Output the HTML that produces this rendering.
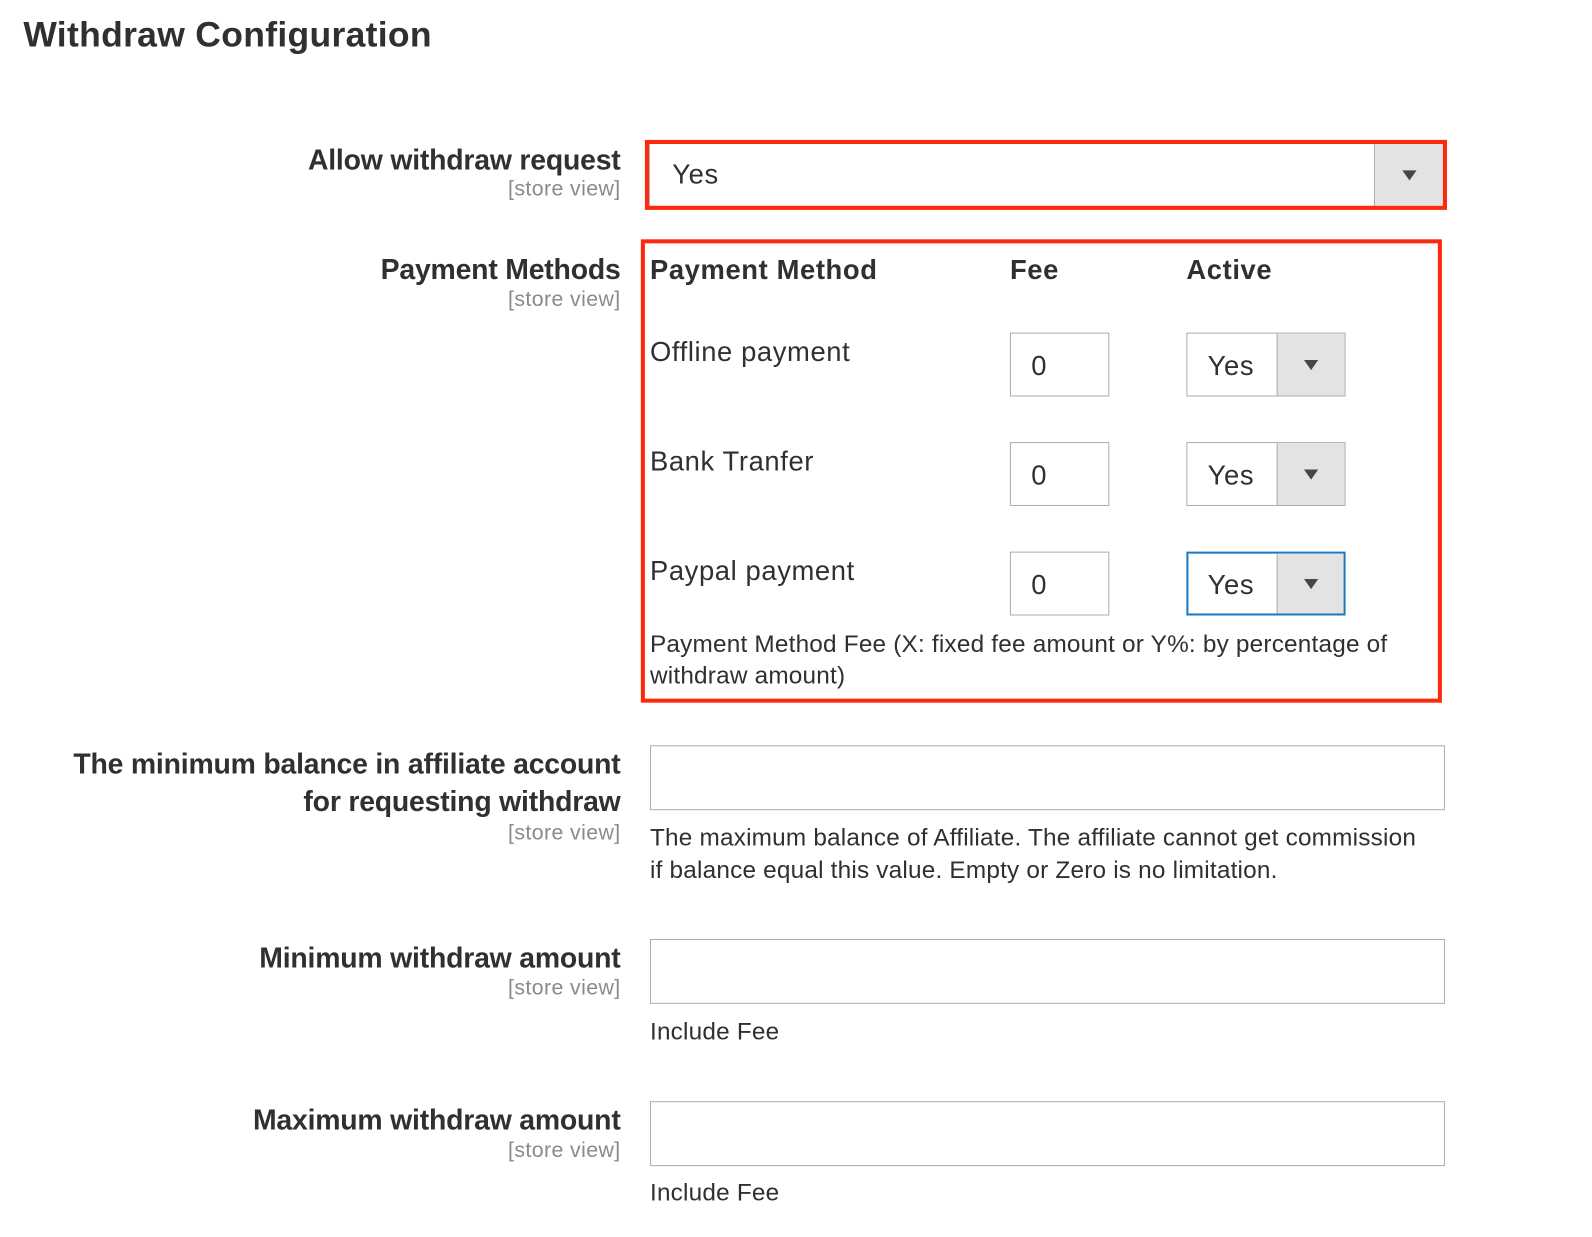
<!DOCTYPE html>
<html><head><meta charset="utf-8"><style>
*{box-sizing:border-box;margin:0;padding:0}
body{width:1592px;height:1236px;background:#fff;font-family:"Liberation Sans",sans-serif;color:#303030;position:relative;overflow:hidden}
#w{position:absolute;left:0;top:0;width:1570px;height:1220px;transform:scale(1.014);transform-origin:0 0}
.a{position:absolute;white-space:nowrap}
.lbl{right:958px;font-size:28px;font-weight:bold;text-align:right;line-height:30px;color:#303030;letter-spacing:-0.2px}
.sv{right:958px;font-size:21px;color:#8a8a8a;line-height:24px;letter-spacing:0.4px}
.t{font-size:27px;line-height:30px;letter-spacing:0.6px}
.h{font-size:27px;line-height:30px;font-weight:bold;letter-spacing:0.6px}
.n{font-size:24px;line-height:31px;letter-spacing:0.2px}
.box{position:absolute;border:1px solid #adadad;background:#fff}
.sel{position:absolute;border:1px solid #adadad;background:#fff}
.sel .arr{position:absolute;top:0;right:0;bottom:0;background:#e3e3e3;border-left:1px solid #adadad}
.sel .arr:after{content:"";position:absolute;left:50%;top:50%;margin:-5px 0 0 -7px;border-left:7px solid transparent;border-right:7px solid transparent;border-top:10px solid #4a4541}
.red{position:absolute;border:4px solid #fc2a0d}
</style></head><body><div id="w">
<div class="a" style="left:23px;top:15px;font-size:35px;font-weight:bold;color:#303030;line-height:40px;letter-spacing:0.3px">Withdraw Configuration</div>

<div class="a lbl" style="top:143px">Allow withdraw request</div>
<div class="a sv" style="top:175px">[store view]</div>
<div class="sel" style="left:640px;top:141px;width:784px;height:63px"><div class="arr" style="width:68px"></div></div>
<div class="a t" style="left:663px;top:157px">Yes</div>
<div class="red" style="left:636px;top:138px;width:791px;height:69px"></div>

<div class="a lbl" style="top:251px">Payment Methods</div>
<div class="a sv" style="top:284px">[store view]</div>
<div class="red" style="left:632px;top:236px;width:790px;height:457px"></div>
<div class="a h" style="left:641px;top:251px">Payment Method</div>
<div class="a h" style="left:996px;top:251px">Fee</div>
<div class="a h" style="left:1170px;top:251px">Active</div>

<div class="a t" style="left:641px;top:332px">Offline payment</div>
<div class="box" style="left:996px;top:328px;width:98px;height:63px"></div>
<div class="a t" style="left:1017px;top:346px">0</div>
<div class="sel" style="left:1170px;top:328px;width:157px;height:63px"><div class="arr" style="width:67px"></div></div>
<div class="a t" style="left:1191px;top:346px">Yes</div>

<div class="a t" style="left:641px;top:440px">Bank Tranfer</div>
<div class="box" style="left:996px;top:436px;width:98px;height:63px"></div>
<div class="a t" style="left:1017px;top:454px">0</div>
<div class="sel" style="left:1170px;top:436px;width:157px;height:63px"><div class="arr" style="width:67px"></div></div>
<div class="a t" style="left:1191px;top:454px">Yes</div>

<div class="a t" style="left:641px;top:548px">Paypal payment</div>
<div class="box" style="left:996px;top:544px;width:98px;height:63px"></div>
<div class="a t" style="left:1017px;top:562px">0</div>
<div class="sel" style="left:1170px;top:544px;width:157px;height:63px;border:2px solid #1979c3"><div class="arr" style="width:66px;border-left-color:#adadad"></div></div>
<div class="a t" style="left:1191px;top:562px">Yes</div>

<div class="a n" style="left:641px;top:620px">Payment Method Fee (X: fixed fee amount or Y%: by percentage of</div>
<div class="a n" style="left:641px;top:651px">withdraw amount)</div>

<div class="a lbl" style="top:739px">The minimum balance in affiliate account</div>
<div class="a lbl" style="top:776px">for requesting withdraw</div>
<div class="a sv" style="top:810px">[store view]</div>
<div class="box" style="left:641px;top:735px;width:784px;height:64px"></div>
<div class="a n" style="left:641px;top:811px">The maximum balance of Affiliate. The affiliate cannot get commission</div>
<div class="a n" style="left:641px;top:843px">if balance equal this value. Empty or Zero is no limitation.</div>

<div class="a lbl" style="top:930px">Minimum withdraw amount</div>
<div class="a sv" style="top:963px">[store view]</div>
<div class="box" style="left:641px;top:926px;width:784px;height:64px"></div>
<div class="a n" style="left:641px;top:1002px">Include Fee</div>

<div class="a lbl" style="top:1090px">Maximum withdraw amount</div>
<div class="a sv" style="top:1123px">[store view]</div>
<div class="box" style="left:641px;top:1086px;width:784px;height:64px"></div>
<div class="a n" style="left:641px;top:1161px">Include Fee</div>
</div></body></html>
